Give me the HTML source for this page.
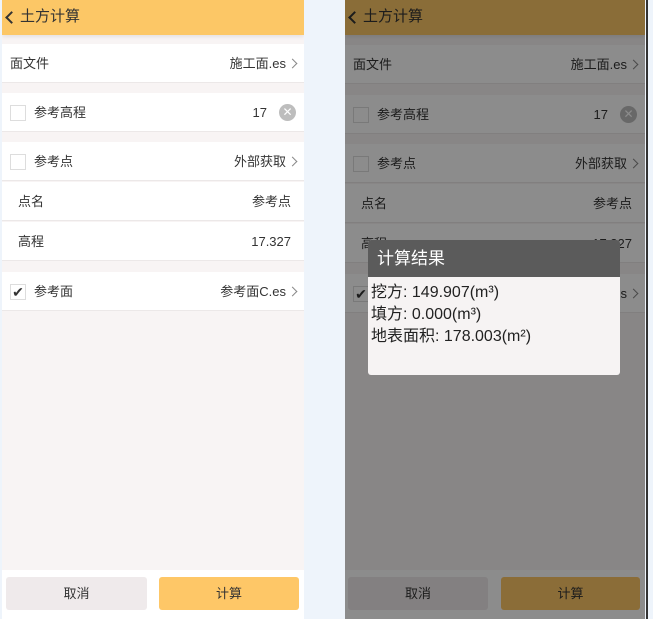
<!DOCTYPE html>
<html><head><meta charset="utf-8"><style>
*{margin:0;padding:0;box-sizing:border-box}
body{width:653px;height:619px;background:#eef4fb;font-family:"Liberation Sans","Noto Sans CJK SC",sans-serif;position:relative;overflow:hidden;color:#333}
.p{position:absolute;top:0;width:302px;height:619px;background:#f8f4f4;overflow:hidden}
.hd{position:absolute;left:0;top:0;width:100%;height:35px;background:#fcc766;font-size:15px;color:#333;line-height:33px;padding-left:18px;box-shadow:0 2px 4px rgba(0,0,0,.08)}
.hd:before{content:"";position:absolute;left:5px;top:13px;width:7px;height:7px;border-left:2px solid #333;border-bottom:2px solid #333;transform:rotate(45deg)}
.r{position:absolute;left:0;width:100%;height:39px;background:#fff;font-size:13px;line-height:39px;padding:0 8px;border-bottom:1px solid #ece8e8}
.r .v{position:absolute;right:8px;top:0;color:#333}
.ch{display:inline-block;width:7px;height:7px;border-right:1.5px solid #888;border-top:1.5px solid #888;transform:rotate(45deg);margin-left:3px;position:relative;top:-1px}
.cb{position:absolute;left:8px;top:12px;width:16px;height:16px;border:1px solid #ddd;background:#fff}
.x{display:inline-block;width:17px;height:17px;border-radius:50%;background:#bdbdbd;vertical-align:middle;margin-left:12px;position:relative;top:-1px;color:#fff;font-size:12px;line-height:17px;text-align:center}
.ft{position:absolute;left:0;top:570px;width:100%;height:49px;background:#fff}
.b{position:absolute;top:7px;height:33px;border-radius:3px;font-size:13px;line-height:33px;text-align:center}
.ov{position:absolute;left:0;top:0;width:100%;height:100%;background:rgba(0,0,0,.45)}
</style></head><body>
<div class="p" style="left:2px">
<div class="hd">土方计算</div>
<div class="r" style="top:44px">面文件<span class="v">施工面.es<i class="ch"></i></span></div>
<div class="r" style="top:93px;padding-left:32px"><span class="cb"></span>参考高程<span class="v">17<span class="x">✕</span></span></div>
<div class="r" style="top:142px;padding-left:32px"><span class="cb"></span>参考点<span class="v">外部获取<i class="ch"></i></span></div>
<div class="r" style="top:182px;padding-left:16px">点名<span class="v" style="right:13px">参考点</span></div>
<div class="r" style="top:222px;padding-left:16px">高程<span class="v" style="right:13px">17.327</span></div>
<div class="r" style="top:272px;padding-left:32px"><span class="cb" style="font-size:14px;line-height:14px;text-align:center">✔</span>参考面<span class="v">参考面C.es<i class="ch"></i></span></div>
<div class="ft"><div class="b" style="left:4px;width:141px;background:#efeaeb">取消</div><div class="b" style="left:157px;width:140px;background:#fec767">计算</div></div>
</div>
<div class="p" style="left:345px;width:300px">
<div class="hd">土方计算</div>
<div class="r" style="top:45px">面文件<span class="v">施工面.es<i class="ch"></i></span></div>
<div class="r" style="top:95px;padding-left:32px"><span class="cb"></span>参考高程<span class="v">17<span class="x">✕</span></span></div>
<div class="r" style="top:144px;padding-left:32px"><span class="cb"></span>参考点<span class="v">外部获取<i class="ch"></i></span></div>
<div class="r" style="top:184px;padding-left:16px">点名<span class="v" style="right:13px">参考点</span></div>
<div class="r" style="top:224px;padding-left:16px">高程<span class="v" style="right:13px">17.327</span></div>
<div class="r" style="top:274px;padding-left:32px"><span class="cb" style="font-size:14px;line-height:14px;text-align:center">✔</span>参考面<span class="v">参考面C.es<i class="ch"></i></span></div>
<div class="ft"><div class="b" style="left:3px;width:140px;background:#efeaeb">取消</div><div class="b" style="left:156px;width:139px;background:#fec767">计算</div></div>
<div class="ov"></div>
<div style="position:absolute;left:23px;top:240px;width:252px;height:135px;background:#f6f3f3;border-radius:3px;overflow:hidden">
<div style="height:37px;background:#5b5b5b;color:#fff;font-size:17px;line-height:38px;padding-left:9px">计算结果</div>
<div style="padding:5px 3px;font-size:16px;line-height:22px;color:#222">挖方: 149.907(m³)<br>填方: 0.000(m³)<br>地表面积: 178.003(m²)</div>
</div>
</div>
<div style="position:absolute;left:646px;top:0;width:2px;height:619px;background:#333"></div>
</body></html>
